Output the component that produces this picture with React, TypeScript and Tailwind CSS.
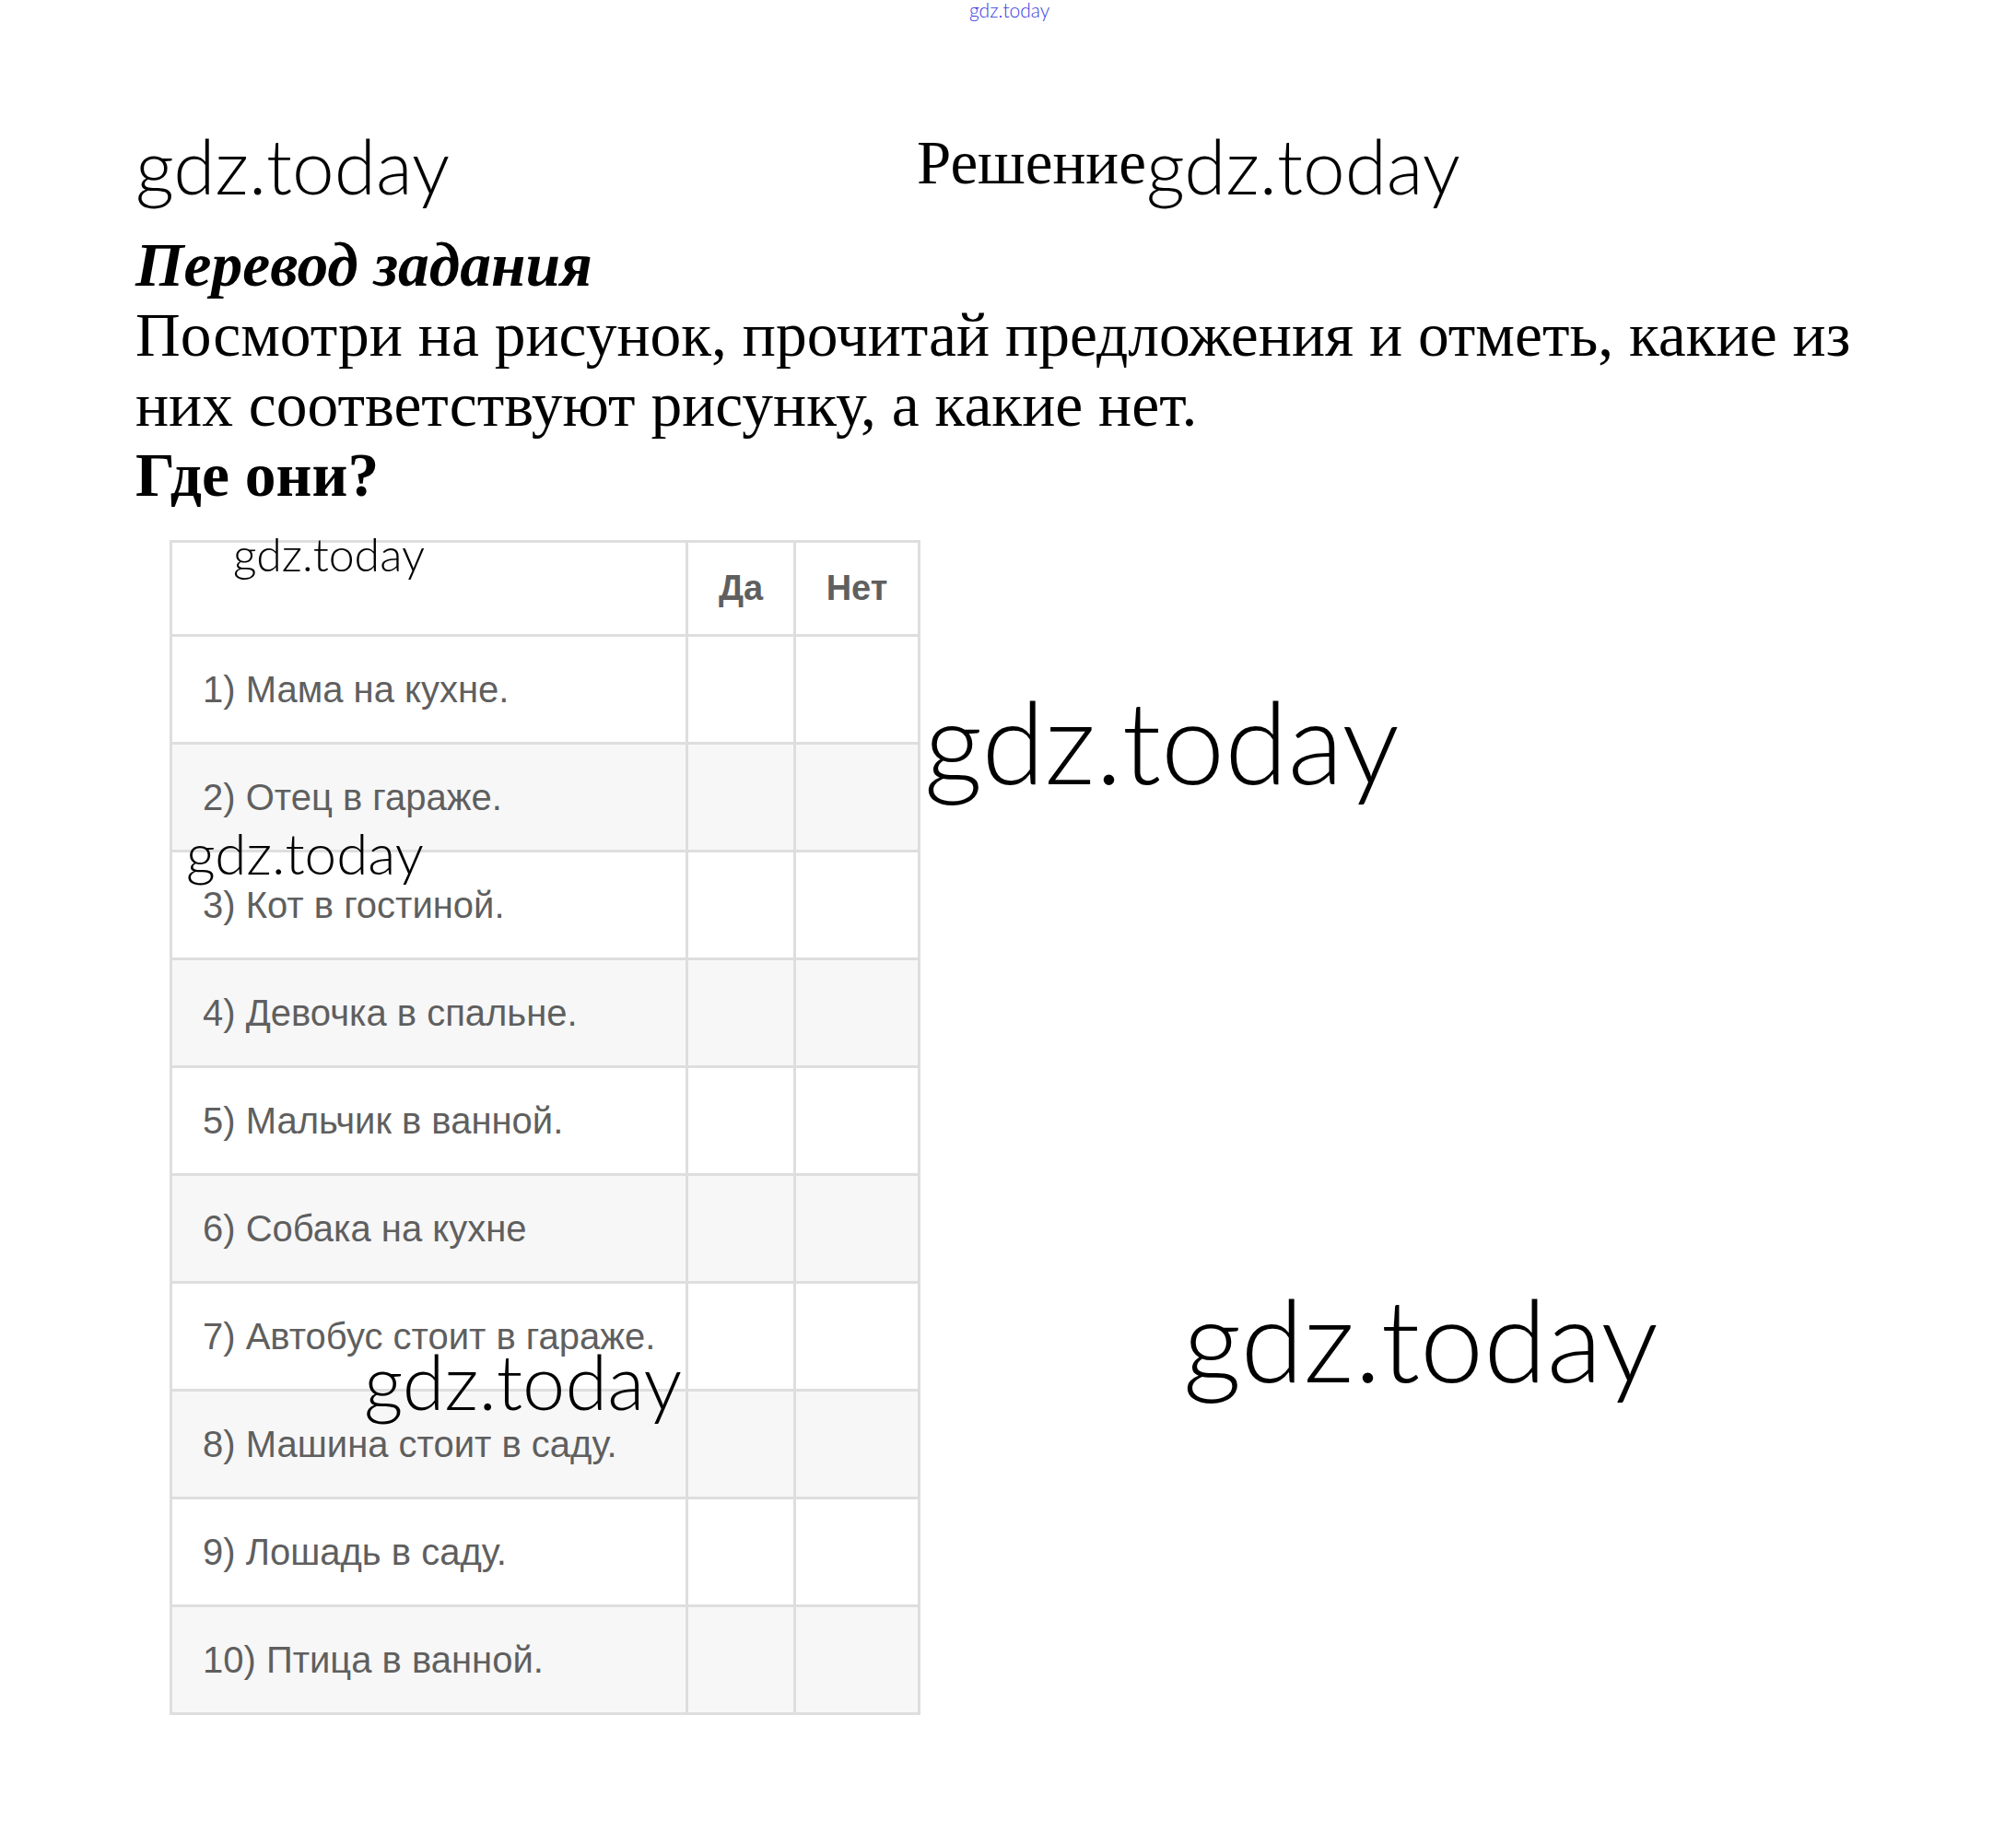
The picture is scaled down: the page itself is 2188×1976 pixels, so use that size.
const rows = [
  "1) Мама на кухне.",
  "2) Отец в гараже.",
  "3) Кот в гостиной.",
  "4) Девочка в спальне.",
  "5) Мальчик в ванной.",
  "6) Собака на кухне",
  "7) Автобус стоит в гараже.",
  "8) Машина стоит в саду.",
  "9) Лошадь в саду.",
  "10) Птица в ванной.",
];

// watermark text, thin geometric look
const wmFont = "whitespace-nowrap font-light font-['Lato',sans-serif]";
const wm = `absolute leading-none ${wmFont}`;
const cell = "border-[3px] border-[#dedede]";

export default function App() {
  return (
    <div className="relative w-[2188px] h-[1976px] bg-white text-black">
      <div className="pl-[147px] pt-[138px] font-['Liberation_Serif','Times_New_Roman',serif]">
        <div className={`h-[112px] text-[82px] leading-none ${wmFont}`}>
          <span className="inline-block w-[848px]">gdz.today</span>
          <span className="align-[12px] text-[67px] font-normal font-['Liberation_Serif','Times_New_Roman',serif]">Решение</span>
          <span>gdz.today</span>
        </div>
        <h2 className="text-[67.5px] leading-[76px] font-bold italic">Перевод задания</h2>
        <p className="text-[67.5px] leading-[76px] w-[1900px]">
          Посмотри на рисунок, прочитай предложения и отметь, какие из них соответствуют рисунку, а какие нет.
        </p>
        <h3 className="text-[67.5px] leading-[76px] font-bold">Где они?</h3>

        <table className="mt-[32px] ml-[37px] border-collapse font-['Liberation_Sans',Arial,sans-serif] text-[#5f5f5f]">
          <thead>
            <tr className="h-[102px]">
              <th className={`w-[560px] ${cell}`}></th>
              <th className={`w-[117px] ${cell} text-[38px] font-bold`}>Да</th>
              <th className={`w-[135px] ${cell} text-[38px] font-bold`}>Нет</th>
            </tr>
          </thead>
          <tbody>
            {rows.map((r, i) => (
              <tr key={r} className={`h-[117px] ${i % 2 === 1 ? "bg-[#f7f7f7]" : "bg-white"}`}>
                <td className={`${cell} pl-[33px] text-[40px]`}>{r}</td>
                <td className={cell}></td>
                <td className={cell}></td>
              </tr>
            ))}
          </tbody>
        </table>
      </div>

      <span className={`${wm} left-[1052px] top-0 text-[21px] text-[#3a3ae0]`}>gdz.today</span>
      <span className={`${wm} left-[253px] top-[576px] text-[50px]`}>gdz.today</span>
      <span className={`${wm} left-[1003px] top-[741px] text-[124px]`}>gdz.today</span>
      <span className={`${wm} left-[202px] top-[894px] text-[62px]`}>gdz.today</span>
      <span className={`${wm} left-[395px] top-[1457px] text-[83px]`}>gdz.today</span>
      <span className={`${wm} left-[1284px] top-[1390px] text-[124px]`}>gdz.today</span>
    </div>
  );
}
